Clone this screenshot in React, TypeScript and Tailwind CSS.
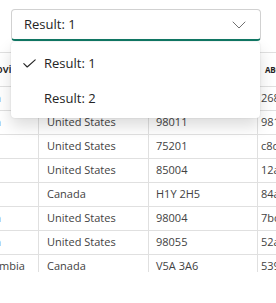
import React from "react";

const rows: [string, string, string, string][] = [
  ["Washington", "United States", "98052", "268af621-76d7-4c78-9441-144fd139821a"],
  ["Washington", "United States", "98011", "981b3303-aca2-49c7-9a96-fb670785b269"],
  ["Texas", "United States", "75201", "c8df3bd9-48f0-4654-a8dd-14a67a84d3c6"],
  ["Arizona", "United States", "85004", "12ae5ee1-fc3e-468b-9b92-3b970b169774"],
  ["Quebec", "Canada", "H1Y 2H5", "84a95f62-3ae8-4e7e-bbd5-5a6f00cd982d"],
  ["Washington", "United States", "98004", "7bccf442-2268-46cc-8472-14c44c14e98c"],
  ["Washington", "United States", "98055", "52a68a49-3e0f-4e19-a9a1-66cb0b47f0ee"],
  ["British Columbia", "Canada", "V5A 3A6", "53967a6e-9c1b-41d7-8216-71a1b28c4f1a"],
];

export default function App() {
  return (
    <div className="relative w-[276px] h-[303px] overflow-hidden bg-white font-['Open_Sans',sans-serif] text-[#424242]">
      <div className="pt-[52px]">
        <div className="h-[220px] overflow-hidden">
          <div className="flex h-[35px] border-t border-b border-[#e0e0e0] text-[11px] font-semibold text-[#242424]">
            <div className="w-[39px] border-r border-[#e0e0e0] overflow-hidden flex items-center">
              <span className="ml-[-43px] whitespace-nowrap">StateProvince</span>
            </div>
            <div className="w-[110px] border-r border-[#e0e0e0] flex items-center pl-[8px]">CountryRegion</div>
            <div className="w-[109px] border-r border-[#e0e0e0] flex items-center pl-[7px]">PostalCode</div>
            <div className="flex-1 flex items-center pl-[7px] overflow-hidden whitespace-nowrap">
              <span className="text-[8px] font-bold tracking-[-0.2px]">ABC</span>
              <span className="ml-[4px]">rowguid</span>
            </div>
          </div>
          {rows.map((r, i) => (
            <div key={i} className="flex h-[24px] border-b border-[#e0e0e0] text-[11px]">
              <div className="w-[39px] border-r border-[#e0e0e0] overflow-hidden flex items-center">
                <span className="ml-[-60px] whitespace-nowrap">{r[0]}</span>
              </div>
              <div className="w-[110px] border-r border-[#e0e0e0] flex items-center pl-[8px] whitespace-nowrap">{r[1]}</div>
              <div className="w-[109px] border-r border-[#e0e0e0] flex items-center pl-[7px] whitespace-nowrap">{r[2]}</div>
              <div className="flex-1 flex items-center pl-[3px] overflow-hidden whitespace-nowrap">{r[3]}</div>
            </div>
          ))}
        </div>
      </div>

      <div className="absolute left-[11px] top-[9px] w-[250px] h-[32px] rounded-[4px] border border-[#d1d1d1] border-b-2 border-b-[#117865] bg-white flex items-center justify-between pl-[12px] pr-[14px] text-[13px] text-[#242424]">
        <span>Result: 1</span>
        <svg width="14" height="8" viewBox="0 0 14 8" fill="none">
          <path d="M1 1 L7 7 L13 1" stroke="#707070" strokeWidth="1" strokeLinecap="round" strokeLinejoin="round" />
        </svg>
      </div>

      <div className="absolute left-[11px] top-[42px] w-[249px] rounded-[4px] bg-white pt-[4px] pb-[2px] shadow-[0_0_2px_rgba(0,0,0,0.12),0_8px_16px_rgba(0,0,0,0.14)] text-[13px] text-[#242424]">
        <div className="flex items-center h-[35px]">
          <div className="w-[33px] flex justify-start pl-[12px]">
            <svg width="13" height="9" viewBox="0 0 13 9" fill="none">
              <path d="M0.8 4.6 L4.2 8 L12.2 0.8" stroke="#242424" strokeWidth="1.1" strokeLinecap="round" strokeLinejoin="round" />
            </svg>
          </div>
          <span>Result: 1</span>
        </div>
        <div className="flex items-center h-[35px]">
          <div className="w-[33px]" />
          <span>Result: 2</span>
        </div>
      </div>
    </div>
  );
}
